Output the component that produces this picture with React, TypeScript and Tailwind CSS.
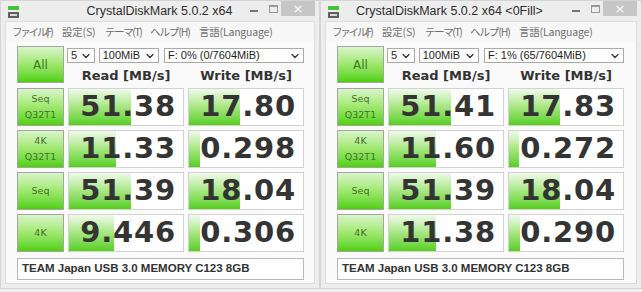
import { ChevronDown } from 'lucide-react';

type Row = { label: string[]; read: string; write: string };

type Win = {
  title: string;
  drive: string;
  width: string;
  titleClass: string;
  rows: Row[];
};

const windows: Win[] = [
  {
    title: 'CrystalDiskMark 5.0.2 x64',
    drive: 'F: 0% (0/7604MiB)',
    width: 'w-[320px]',
    titleClass: 'pl-[52px] text-center',
    rows: [
      { label: ['Seq', 'Q32T1'], read: '51.38', write: '17.80' },
      { label: ['4K', 'Q32T1'], read: '11.33', write: '0.298' },
      { label: ['Seq'], read: '51.39', write: '18.04' },
      { label: ['4K'], read: '9.446', write: '0.306' },
    ],
  },
  {
    title: 'CrystalDiskMark 5.0.2 x64 <0Fill>',
    drive: 'F: 1% (65/7604MiB)',
    width: 'w-[322px]',
    titleClass: 'pl-[12px] text-left',
    rows: [
      { label: ['Seq', 'Q32T1'], read: '51.41', write: '17.83' },
      { label: ['4K', 'Q32T1'], read: '11.60', write: '0.272' },
      { label: ['Seq'], read: '51.39', write: '18.04' },
      { label: ['4K'], read: '11.38', write: '0.290' },
    ],
  },
];

// menu slots; kana in the original UI font is proportional, so squeeze a bit
const menu = [
  { t: 'ファイル(F)', cls: 'w-[50px] tracking-[-2.2px]' },
  { t: '設定(S)', cls: 'w-[43px] tracking-[-0.2px]' },
  { t: 'テーマ(T)', cls: 'w-[45px] tracking-[-1.4px]' },
  { t: 'ヘルプ(H)', cls: 'w-[49px] tracking-[-1.1px]' },
  { t: '言語(Language)', cls: 'w-[72px] tracking-[-0.2px]' },
];

// meter width, log scale like CDM
const meter = (v: string) => {
  const n = parseFloat(v);
  const p = (Math.log10(n * 10) / 5) * 100;
  return `${Math.max(0, Math.min(100, p))}%`;
};

function AppIcon() {
  return (
    <svg width="12" height="12" viewBox="0 0 12 12">
      <rect x="0" y="0" width="11" height="4" fill="#45c23a" />
      <rect x="0" y="6" width="11" height="6" fill="#5f5f5f" />
      <rect x="2" y="8" width="7" height="2" fill="#d6d6d6" />
    </svg>
  );
}

function Select({ w, text }: { w: string; text: string }) {
  return (
    <div className={`${w} h-[15px] bg-white border border-[#a9a9a9] flex items-center justify-between pl-[3px] pr-[2px] text-[11px] leading-none text-[#1e1e1e] font-['Liberation_Sans',sans-serif]`}>
      <span>{text}</span>
      <ChevronDown size={12} strokeWidth={2.6} className="text-[#333]" />
    </div>
  );
}

function Result({ value }: { value: string }) {
  return (
    <div className="relative h-[38px] bg-white border border-[#d2d2d2] overflow-hidden">
      <div
        className="absolute left-0 top-0 bottom-0 bg-gradient-to-b from-[#f0faea] via-[#a6e680] to-[#55cf14]"
        style={{ width: meter(value) }}
      />
      <div className="relative h-full flex items-center justify-end pr-[7px] text-[29px] font-bold tracking-[0.8px] text-[#343434] font-['DejaVu_Sans',sans-serif]">
        {value}
      </div>
    </div>
  );
}

function Window({ win }: { win: Win }) {
  return (
    <div className={`${win.width} h-[289px] bg-[#ededed] border border-[#d4d4d4] flex flex-col`}>
      <div className="h-[20px] flex items-start">
        <div className="w-[23px] shrink-0 pl-[7px] pt-[5px]">
          <AppIcon />
        </div>
        <div className={`flex-1 pt-[3px] text-[12.5px] leading-[15px] text-[#2e2e2e] font-['Liberation_Sans',sans-serif] whitespace-nowrap ${win.titleClass}`}>
          {win.title}
        </div>
        <div className="w-[76px] shrink-0 flex items-start justify-end pr-[4px]">
          <div className="w-[22px] h-[15px] flex items-center justify-center">
            <div className="w-[8px] h-[2px] bg-[#777] mt-[5px]" />
          </div>
          <div className="w-[16px] h-[15px] flex items-start justify-center pt-[4px]">
            <div className="w-[9px] h-[8px] border border-[#999] border-t-2" />
          </div>
          <div className="w-[34px] h-[15px] bg-[#c6c6c6] flex items-center justify-center text-white text-[13px] leading-none font-['DejaVu_Sans',sans-serif]">
            ×
          </div>
        </div>
      </div>
      <div className="flex-1 mx-[4px] mb-[4px] bg-[#fafafa] border border-[#dcdcdc] flex flex-col">
        <div className="h-[20px] flex items-center pl-[6px] bg-[#f7f7f7] text-[10.5px] text-[#707070] font-['Noto_Sans_CJK_JP',sans-serif] whitespace-nowrap">
          {menu.map(m => (
            <span key={m.t} className={`${m.cls} shrink-0`}>
              {m.t}
            </span>
          ))}
        </div>
        <div className="pl-[11px] pt-[4px] grid grid-cols-[47px_116px_116px] gap-x-[4px] gap-y-[4px]">
          <div className="h-[37px] border border-[#a4a4a4] bg-gradient-to-b from-[#d9f5c9] via-[#9ee86c] to-[#4dd000] flex items-center justify-center text-[12px] text-[#3b7a1c] font-['DejaVu_Sans',sans-serif]">
            All
          </div>
          <div className="col-span-2 flex flex-col">
            <div className="flex gap-[4px] -ml-[1px] mt-[2px]">
              <Select w="w-[28px]" text="5" />
              <Select w="w-[61px]" text="100MiB" />
              <div className="ml-[1px]">
                <Select w="w-[140px]" text={win.drive} />
              </div>
            </div>
            <div className="grid grid-cols-2 gap-x-[4px] mt-[5px] text-[13px] leading-[16px] font-bold text-[#333] text-center font-['DejaVu_Sans',sans-serif]">
              <span>Read [MB/s]</span>
              <span>Write [MB/s]</span>
            </div>
          </div>
          {win.rows.map((r, i) => (
            <div key={i} className="contents">
              <div className="h-[38px] border border-[#a4a4a4] bg-gradient-to-b from-[#d9f5c9] via-[#9ee86c] to-[#4dd000] flex flex-col items-center justify-center text-[9.5px] leading-[16px] text-[#44702d] font-['DejaVu_Sans',sans-serif]">
                {r.label.map(l => (
                  <span key={l}>{l}</span>
                ))}
              </div>
              <Result value={r.read} />
              <Result value={r.write} />
            </div>
          ))}
          <div className="col-span-3 mt-[2px] h-[22px] bg-white border border-[#b9b9b9] flex items-center pl-[4px] text-[11.5px] font-bold text-[#333] font-['Liberation_Sans',sans-serif]">
            TEAM Japan USB 3.0 MEMORY C123 8GB
          </div>
        </div>
      </div>
    </div>
  );
}

export default function App() {
  return (
    <div className="w-[642px] h-[292px] bg-[#f0f0f0] flex items-start overflow-hidden">
      {windows.map(w => (
        <Window key={w.title} win={w} />
      ))}
    </div>
  );
}
